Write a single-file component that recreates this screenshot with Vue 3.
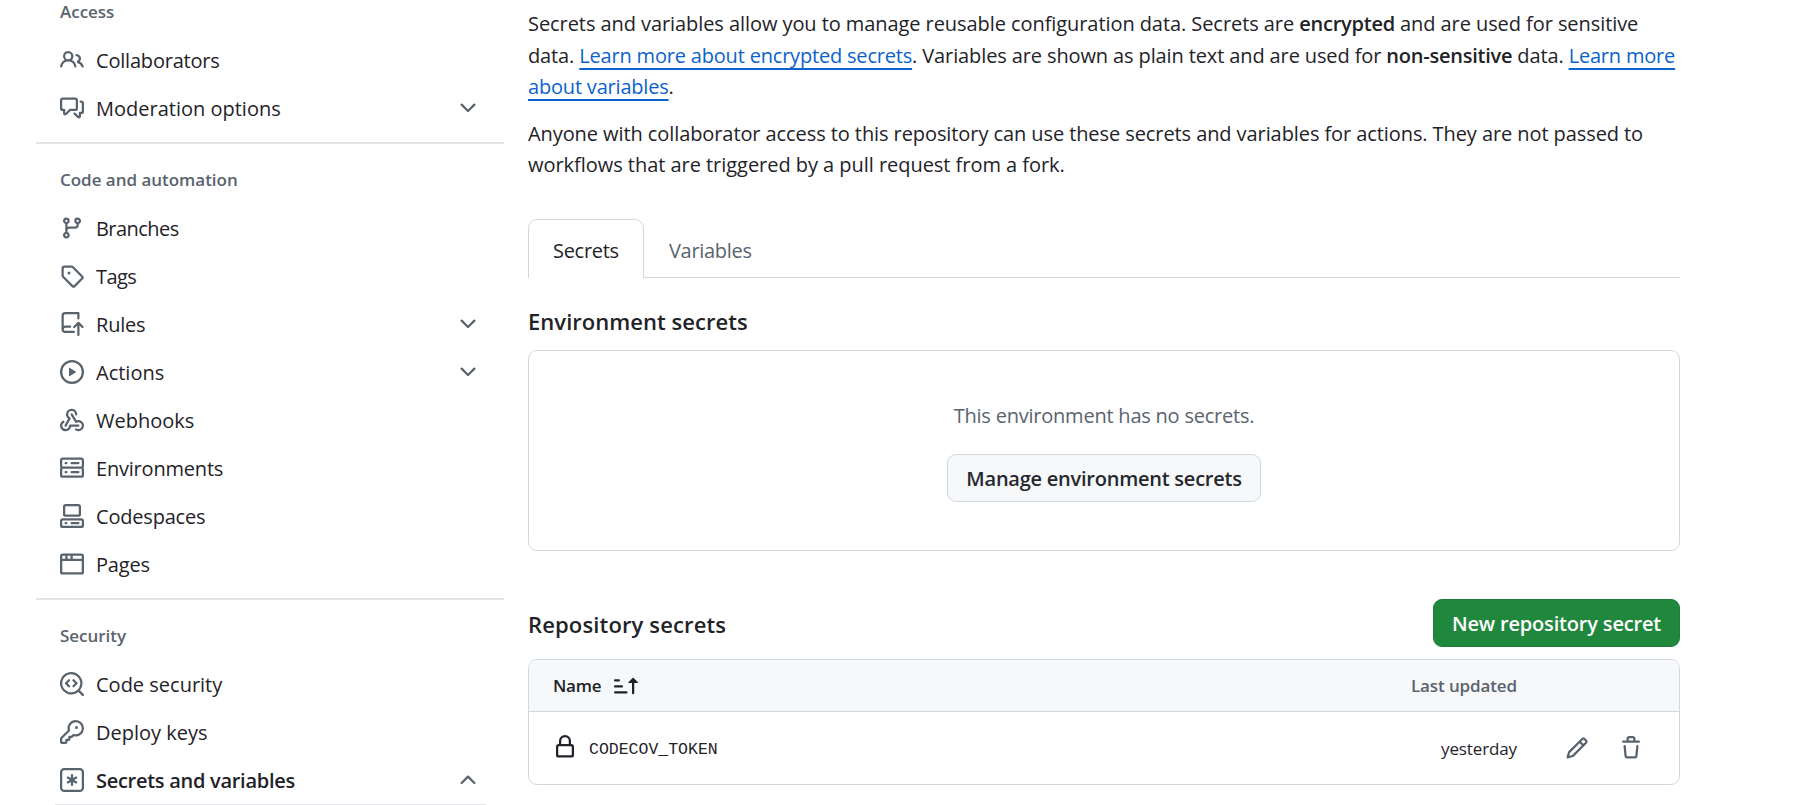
<script setup>
const icons = {
  people: 'M2 5.5a3.5 3.5 0 1 1 5.898 2.549 5.508 5.508 0 0 1 3.034 4.084.75.75 0 1 1-1.482.235 4 4 0 0 0-7.9 0 .75.75 0 0 1-1.482-.236A5.507 5.507 0 0 1 3.102 8.05 3.493 3.493 0 0 1 2 5.5ZM11 4a3.001 3.001 0 0 1 2.22 5.018 5.01 5.01 0 0 1 2.56 3.012.749.749 0 0 1-.885.954.752.752 0 0 1-.549-.514 3.507 3.507 0 0 0-2.522-2.372.75.75 0 0 1-.574-.73v-.352a.75.75 0 0 1 .416-.672A1.5 1.5 0 0 0 11 5.5.75.75 0 0 1 11 4Zm-5.5-.5a2 2 0 1 0-.001 3.999A2 2 0 0 0 5.5 3.5Z',
  discussion: 'M1.75 1h8.5c.966 0 1.75.784 1.75 1.75v5.5A1.75 1.75 0 0 1 10.25 10H7.061l-2.574 2.573A1.458 1.458 0 0 1 2 11.543V10h-.25A1.75 1.75 0 0 1 0 8.25v-5.5C0 1.784.784 1 1.75 1ZM1.5 2.75v5.5c0 .138.112.25.25.25h1a.75.75 0 0 1 .75.75v2.19l2.72-2.72a.749.749 0 0 1 .53-.22h3.5a.25.25 0 0 0 .25-.25v-5.5a.25.25 0 0 0-.25-.25h-8.5a.25.25 0 0 0-.25.25Zm13 2a.25.25 0 0 0-.25-.25h-.5a.75.75 0 0 1 0-1.5h.5c.966 0 1.75.784 1.75 1.75v5.5A1.75 1.75 0 0 1 14.25 12H14v1.543a1.458 1.458 0 0 1-2.487 1.03L9.22 12.28a.749.749 0 0 1 .326-1.275.749.749 0 0 1 .734.215l2.22 2.22v-2.19a.75.75 0 0 1 .75-.75h1a.25.25 0 0 0 .25-.25Z',
  branch: 'M9.5 3.25a2.25 2.25 0 1 1 3 2.122V6A2.5 2.5 0 0 1 10 8.5H6a1 1 0 0 0-1 1v1.128a2.251 2.251 0 1 1-1.5 0V5.372a2.25 2.25 0 1 1 1.5 0v1.836A2.493 2.493 0 0 1 6 7h4a1 1 0 0 0 1-1v-.628A2.25 2.25 0 0 1 9.5 3.25Zm-6 0a.75.75 0 1 0 1.5 0 .75.75 0 0 0-1.5 0Zm8.25-.75a.75.75 0 1 0 0 1.5.75.75 0 0 0 0-1.5ZM4.25 12a.75.75 0 1 0 0 1.5.75.75 0 0 0 0-1.5Z',
  tag: 'M1 7.775V2.75C1 1.784 1.784 1 2.75 1h5.025c.464 0 .91.184 1.238.513l6.25 6.25a1.75 1.75 0 0 1 0 2.474l-5.026 5.026a1.75 1.75 0 0 1-2.474 0l-6.25-6.25A1.752 1.752 0 0 1 1 7.775Zm1.5 0c0 .066.026.13.073.177l6.25 6.25a.25.25 0 0 0 .354 0l5.025-5.025a.25.25 0 0 0 0-.354l-6.25-6.25a.25.25 0 0 0-.177-.073H2.75a.25.25 0 0 0-.25.25ZM6 5a1 1 0 1 1 0 2 1 1 0 0 1 0-2Z',
  rules: 'M1 2.5A2.5 2.5 0 0 1 3.5 0h8.75a.75.75 0 0 1 .75.75v3.5a.75.75 0 0 1-1.5 0V1.5h-8a1 1 0 0 0-1 1v6.708A2.493 2.493 0 0 1 3.5 9h3.25a.75.75 0 0 1 0 1.5H3.5a1 1 0 0 0 0 2h5.75a.75.75 0 0 1 0 1.5H3.5A2.5 2.5 0 0 1 1 11.5ZM11.72 6.72a.75.75 0 0 1 1.06 0l2.75 2.75a.75.75 0 1 1-1.06 1.06L13 9.06v6.19a.75.75 0 0 1-1.5 0V9.06l-1.47 1.47a.75.75 0 1 1-1.06-1.06Z',
  play: 'M8 0a8 8 0 1 1 0 16A8 8 0 0 1 8 0ZM1.5 8a6.5 6.5 0 1 0 13 0 6.5 6.5 0 0 0-13 0Zm4.879-2.773 4.264 2.559a.25.25 0 0 1 0 .428l-4.264 2.559A.25.25 0 0 1 6 10.559V5.442a.25.25 0 0 1 .379-.215Z',
  webhook: 'M5.5 4.25a2.25 2.25 0 0 1 4.5 0 .75.75 0 0 0 1.5 0 3.75 3.75 0 1 0-6.14 2.889l-2.272 4.258a.75.75 0 0 0 1.324.706L7 7.25a.75.75 0 0 0-.309-1.015A2.25 2.25 0 0 1 5.5 4.25ZM7.364 3.607a.75.75 0 0 1 1.03.257l2.608 4.349a3.75 3.75 0 1 1-.628 6.785.75.75 0 0 1 .752-1.299 2.25 2.25 0 1 0-.033-3.88.75.75 0 0 1-1.03-.256L7.107 4.636a.75.75 0 0 1 .257-1.03ZM2.9 8.776A.75.75 0 0 1 2.625 9.8 2.25 2.25 0 1 0 6 11.75a.75.75 0 0 1 .75-.751h5.5a.75.75 0 0 1 0 1.5H7.425a3.751 3.751 0 1 1-5.55-3.998.75.75 0 0 1 1.024.274Z',
  server: 'M1.75 1h12.5c.966 0 1.75.784 1.75 1.75v4c0 .372-.116.717-.314 1 .198.283.314.628.314 1v4a1.75 1.75 0 0 1-1.75 1.75H1.75A1.75 1.75 0 0 1 0 12.75v-4c0-.358.109-.707.314-1a1.739 1.739 0 0 1-.314-1v-4C0 1.784.784 1 1.75 1ZM1.5 2.75v4c0 .138.112.25.25.25h12.5a.25.25 0 0 0 .25-.25v-4a.25.25 0 0 0-.25-.25H1.75a.25.25 0 0 0-.25.25Zm.25 5.75a.25.25 0 0 0-.25.25v4c0 .138.112.25.25.25h12.5a.25.25 0 0 0 .25-.25v-4a.25.25 0 0 0-.25-.25ZM7 4.75A.75.75 0 0 1 7.75 4h4.5a.75.75 0 0 1 0 1.5h-4.5A.75.75 0 0 1 7 4.75ZM7.75 10h4.5a.75.75 0 0 1 0 1.5h-4.5a.75.75 0 0 1 0-1.5ZM3 4.75A.75.75 0 0 1 3.75 4h.5a.75.75 0 0 1 0 1.5h-.5A.75.75 0 0 1 3 4.75ZM3.75 10h.5a.75.75 0 0 1 0 1.5h-.5a.75.75 0 0 1 0-1.5Z',
  codespaces: 'M0 11.25c0-.966.784-1.75 1.75-1.75h12.5c.966 0 1.75.784 1.75 1.75v3A1.75 1.75 0 0 1 14.25 16H1.75A1.75 1.75 0 0 1 0 14.25Zm2-9.5C2 .784 2.784 0 3.75 0h8.5C13.216 0 14 .784 14 1.75v5a1.75 1.75 0 0 1-1.75 1.75h-8.5A1.75 1.75 0 0 1 2 6.75Zm1.75-.25a.25.25 0 0 0-.25.25v5c0 .138.112.25.25.25h8.5a.25.25 0 0 0 .25-.25v-5a.25.25 0 0 0-.25-.25Zm-2 9.5a.25.25 0 0 0-.25.25v3c0 .138.112.25.25.25h12.5a.25.25 0 0 0 .25-.25v-3a.25.25 0 0 0-.25-.25ZM7 12.75a.75.75 0 0 1 .75-.75h4.5a.75.75 0 0 1 0 1.5h-4.5a.75.75 0 0 1-.75-.75Zm-4 0a.75.75 0 0 1 .75-.75h.5a.75.75 0 0 1 0 1.5h-.5a.75.75 0 0 1-.75-.75Z',
  browser: 'M0 2.75C0 1.784.784 1 1.75 1h12.5c.966 0 1.75.784 1.75 1.75v10.5A1.75 1.75 0 0 1 14.25 15H1.75A1.75 1.75 0 0 1 0 13.25ZM14.5 6h-13v7.25c0 .138.112.25.25.25h12.5a.25.25 0 0 0 .25-.25Zm-6-3.5v2h6V2.75a.25.25 0 0 0-.25-.25ZM5 2.5v2h2v-2Zm-3.25 0a.25.25 0 0 0-.25.25V4.5h2v-2Z',
  codescan: 'M8.47 4.97a.75.75 0 0 0 0 1.06L9.94 7.5 8.47 8.97a.75.75 0 1 0 1.06 1.06l2-2a.75.75 0 0 0 0-1.06l-2-2a.75.75 0 0 0-1.06 0ZM6.53 6.03a.75.75 0 0 0-1.06-1.06l-2 2a.75.75 0 0 0 0 1.06l2 2a.75.75 0 1 0 1.06-1.06L5.06 7.5l1.47-1.47ZM12.246 13.307a7.501 7.501 0 1 1 1.06-1.06l2.474 2.473a.749.749 0 1 1-1.06 1.06l-2.474-2.473ZM1.5 7.5a6.002 6.002 0 0 0 3.608 5.504 6.002 6.002 0 0 0 6.486-1.117.748.748 0 0 1 .292-.293A6 6 0 1 0 1.5 7.5Z',
  key: 'M10.5 0a5.499 5.499 0 1 1-1.288 10.848l-.932.932a.749.749 0 0 1-.53.22H7v.75a.749.749 0 0 1-.22.53l-.5.5a.749.749 0 0 1-.53.22H5v.75a.749.749 0 0 1-.22.53l-.5.5a.749.749 0 0 1-.53.22h-2A1.75 1.75 0 0 1 0 14.25v-2c0-.199.079-.389.22-.53l4.932-4.932A5.5 5.5 0 0 1 10.5 0Zm-4 5.5c-.001.431.069.86.205 1.269a.75.75 0 0 1-.181.768L1.5 12.56v1.69c0 .138.112.25.25.25h1.69l.06-.06v-1.19a.75.75 0 0 1 .75-.75h1.19l.06-.06v-1.19a.75.75 0 0 1 .75-.75h1.19l1.023-1.025a.75.75 0 0 1 .768-.18A4 4 0 1 0 6.5 5.5ZM11 6a1 1 0 1 1 0-2 1 1 0 0 1 0 2Z',
  asterisk: 'M0 2.75A2.75 2.75 0 0 1 2.75 0h10.5A2.75 2.75 0 0 1 16 2.75v10.5A2.75 2.75 0 0 1 13.25 16H2.75A2.75 2.75 0 0 1 0 13.25ZM2.75 1.5c-.69 0-1.25.56-1.25 1.25v10.5c0 .69.56 1.25 1.25 1.25h10.5c.69 0 1.25-.56 1.25-1.25V2.75c0-.69-.56-1.25-1.25-1.25ZM8 4a.75.75 0 0 1 .75.75V6.7l1.69-.975a.75.75 0 0 1 .75 1.3L9.5 8l1.69.976a.75.75 0 0 1-.75 1.298L8.75 9.3v1.951a.75.75 0 0 1-1.5 0V9.299l-1.69.976a.75.75 0 0 1-.75-1.3L6.5 8l-1.69-.975a.75.75 0 0 1 .75-1.3l1.69.976V4.75A.75.75 0 0 1 8 4Z',
  down: 'M12.78 5.22a.749.749 0 0 1 0 1.06l-4.25 4.25a.749.749 0 0 1-1.06 0L3.22 6.28a.749.749 0 1 1 1.06-1.06L8 8.939l3.72-3.719a.749.749 0 0 1 1.06 0Z',
  up: 'M3.22 10.53a.749.749 0 0 1 0-1.06l4.25-4.25a.749.749 0 0 1 1.06 0l4.25 4.25a.749.749 0 1 1-1.06 1.06L8 6.811 4.28 10.53a.749.749 0 0 1-1.06 0Z',
  lock: 'M4 4a4 4 0 0 1 8 0v2h.25c.966 0 1.75.784 1.75 1.75v5.5A1.75 1.75 0 0 1 12.25 15h-8.5A1.75 1.75 0 0 1 2 13.25v-5.5C2 6.784 2.784 6 3.75 6H4Zm8.25 3.5h-8.5a.25.25 0 0 0-.25.25v5.5c0 .138.112.25.25.25h8.5a.25.25 0 0 0 .25-.25v-5.5a.25.25 0 0 0-.25-.25ZM10.5 6V4a2.5 2.5 0 1 0-5 0v2Z',
  pencil: 'M11.013 1.427a1.75 1.75 0 0 1 2.474 0l1.086 1.086a1.75 1.75 0 0 1 0 2.474l-8.61 8.61c-.21.21-.47.364-.756.445l-3.251.93a.75.75 0 0 1-.927-.928l.929-3.25c.081-.286.235-.547.445-.758l8.61-8.61Zm.176 4.823L9.75 4.81l-6.286 6.287a.253.253 0 0 0-.064.108l-.558 1.953 1.953-.558a.253.253 0 0 0 .108-.064Zm1.238-3.763a.25.25 0 0 0-.354 0L10.811 3.75l1.439 1.44 1.263-1.263a.25.25 0 0 0 0-.354Z',
  trash: 'M11 1.75V3h2.25a.75.75 0 0 1 0 1.5H2.75a.75.75 0 0 1 0-1.5H5V1.75C5 .784 5.784 0 6.75 0h2.5C10.216 0 11 .784 11 1.75ZM4.496 6.675l.66 6.6a.25.25 0 0 0 .249.225h5.19a.25.25 0 0 0 .249-.225l.66-6.6a.75.75 0 0 1 1.492.149l-.66 6.6A1.748 1.748 0 0 1 10.595 15h-5.19a1.75 1.75 0 0 1-1.741-1.575l-.66-6.6a.75.75 0 1 1 1.492-.15ZM6.5 1.75V3h3V1.75a.25.25 0 0 0-.25-.25h-2.5a.25.25 0 0 0-.25.25Z',
  sort: 'm12.927 2.573 3 3A.25.25 0 0 1 15.75 6H13.5v6.75a.75.75 0 0 1-1.5 0V6H9.75a.25.25 0 0 1-.177-.427l3-3a.25.25 0 0 1 .354 0ZM0 12.25a.75.75 0 0 1 .75-.75h7.5a.75.75 0 0 1 0 1.5H.75a.75.75 0 0 1-.75-.75Zm0-4a.75.75 0 0 1 .75-.75h4.5a.75.75 0 0 1 0 1.5H.75A.75.75 0 0 1 0 8.25Zm0-4a.75.75 0 0 1 .75-.75h2.5a.75.75 0 0 1 0 1.5H.75A.75.75 0 0 1 0 4.25Z'
}

const groups = [
  { title: 'Access', items: [
    { label: 'Collaborators', icon: 'people' },
    { label: 'Moderation options', icon: 'discussion', chevron: 'down', wide: true }
  ] },
  { title: 'Code and automation', items: [
    { label: 'Branches', icon: 'branch', tight: true },
    { label: 'Tags', icon: 'tag', tight: true },
    { label: 'Rules', icon: 'rules', chevron: 'down' },
    { label: 'Actions', icon: 'play', chevron: 'down', wide: true },
    { label: 'Webhooks', icon: 'webhook', wide: true },
    { label: 'Environments', icon: 'server' },
    { label: 'Codespaces', icon: 'codespaces' },
    { label: 'Pages', icon: 'browser' }
  ] },
  { title: 'Security', items: [
    { label: 'Code security', icon: 'codescan', wide: true },
    { label: 'Deploy keys', icon: 'key', wide: true },
    { label: 'Secrets and variables', icon: 'asterisk', chevron: 'up', active: true }
  ] }
]
</script>

<template>
  <div class="page">
    <nav class="sidebar">
      <section v-for="g in groups" :key="g.title" class="group">
        <h3 class="group-title">{{ g.title }}</h3>
        <ul class="list">
          <li v-for="i in g.items" :key="i.label" class="item" :class="{ active: i.active, wide: i.wide, tight: i.tight }">
            <svg class="icon" viewBox="0 0 16 16"><path fill-rule="evenodd" :d="icons[i.icon]" /></svg>
            <span class="label">{{ i.label }}</span>
            <svg v-if="i.chevron" class="icon" viewBox="0 0 16 16"><path :d="icons[i.chevron]" /></svg>
          </li>
        </ul>
      </section>
      <div class="subline"></div>
    </nav>

    <main class="main">
      <p class="para">
        <span class="line first">Secrets and variables allow you to manage reusable configuration data. Secrets are <b>encrypted</b> and are used for sensitive</span>
        <span class="line second">data. <a>Learn more about encrypted secrets</a>. Variables are shown as plain text and are used for <b>non-sensitive</b> data. <a>Learn more</a></span>
        <span class="line"><a>about variables</a>.</span>
      </p>
      <p class="para">
        <span class="line">Anyone with collaborator access to this repository can use these secrets and variables for actions. They are not passed to</span>
        <span class="line last">workflows that are triggered by a pull request from a fork.</span>
      </p>

      <div class="tabs">
        <div class="tab selected">Secrets</div>
        <div class="tab">Variables</div>
      </div>

      <h2 class="heading env">Environment secrets</h2>
      <div class="blank">
        <p class="blank-text">This environment has no secrets.</p>
        <button class="btn">Manage environment secrets</button>
      </div>

      <div class="repo-head">
        <h2 class="heading repo">Repository secrets</h2>
        <button class="btn primary">New repository secret</button>
      </div>

      <div class="table">
        <div class="thead">
          <span class="name">Name</span>
          <svg class="icon dark" viewBox="0 0 16 16"><path :d="icons.sort" /></svg>
          <span class="updated">Last updated</span>
        </div>
        <div class="trow">
          <svg class="icon dark lock" viewBox="0 0 16 16"><path fill-rule="evenodd" :d="icons.lock" /></svg>
          <code class="code">CODECOV_TOKEN</code>
          <span class="date">yesterday</span>
          <svg class="icon pencil" viewBox="0 0 16 16"><path fill-rule="evenodd" :d="icons.pencil" /></svg>
          <svg class="icon trash" viewBox="0 0 16 16"><path fill-rule="evenodd" :d="icons.trash" /></svg>
        </div>
      </div>
    </main>
  </div>
</template>

<style>
body { margin: 0; background: #fff; overflow: hidden; }
</style>

<style scoped>
* { box-sizing: border-box; }
.page {
  display: flex;
  height: 805px;
  overflow: hidden;
  padding-left: 36px;
  font-family: "Open Sans", "Noto Sans", sans-serif;
  font-size: 20px;
  color: #1f2328;
  white-space: nowrap;
}
h2, h3, p, ul { margin: 0; padding: 0; font-weight: 400; }
.icon { width: 24px; height: 24px; flex: none; fill: #59636e; display: block; }
.icon.dark { fill: #1f2328; }

.sidebar { width: 468px; flex: none; }
.group + .group { margin-top: 10px; border-top: 2px solid #e2e4e7; padding-top: 24px; }
.group-title {
  height: 22px;
  padding-left: 24px;
  font-size: 17px;
  line-height: 24px;
  font-weight: 600;
  letter-spacing: -0.02px;
  color: #59636e;
}
.list { list-style: none; margin-top: 14px; }
.item { display: flex; align-items: center; height: 48px; padding: 0 24px; letter-spacing: -0.2px; }
.item.wide { letter-spacing: 0; }
.item.tight { letter-spacing: -0.55px; }
.item.active { font-weight: 600; letter-spacing: -0.28px; }
.label { flex: 1; margin-left: 12px; }
.subline { height: 1px; margin: 0 18px 0 19px; background: #e2e4e7; }

.main { width: 1152px; margin-left: 24px; padding-top: 7.5px; flex: none; }
.para { line-height: 31.5px; letter-spacing: -0.085px; }
.para + .para { margin-top: 15.5px; }
.line { display: block; height: 31.5px; }
.line.first { height: 32px; letter-spacing: -0.072px; }
.line.second { height: 31px; letter-spacing: -0.12px; }
.line.last { letter-spacing: -0.04px; }
.para b { font-weight: 600; letter-spacing: -0.24px; }
.para a {
  color: #0b62cb;
  letter-spacing: -0.19px;
  text-decoration: underline 2px;
  text-decoration-skip-ink: none;
  text-underline-offset: 5px;
}
.tabs { display: flex; height: 59px; margin-top: 38.5px; box-shadow: inset 0 -1px #d1d9e0; }
.tab {
  height: 59px;
  padding: 0 24px;
  border: 1px solid transparent;
  border-bottom: 0;
  line-height: 62px;
  color: #59636e;
  letter-spacing: -0.3px;
}
.tab.selected { width: 116px; background: #fff; border-color: #d1d9e0; border-radius: 9px 9px 0 0; color: #1f2328; }
.heading { font-size: 22px; font-weight: 600; line-height: 32px; }
.env { margin-top: 27px; letter-spacing: 0.04px; }
.repo { padding-top: 2px; letter-spacing: 0.14px; }
.blank {
  display: flex;
  flex-direction: column;
  align-items: center;
  height: 201px;
  margin-top: 13px;
  border: 1px solid #d1d9e0;
  border-radius: 9px;
}
.blank-text { margin-top: 49px; line-height: 32px; letter-spacing: -0.22px; color: #59636e; }
.btn {
  width: 314px;
  height: 48px;
  padding: 2px 0 0;
  margin: 22px 0 0;
  border: 1px solid #d1d9e0;
  border-radius: 9px;
  background: #f6f8fa;
  font: 600 20px/44px "Open Sans", "Noto Sans", sans-serif;
  letter-spacing: -0.24px;
  color: #25292e;
}
.btn.primary { width: 247px; margin: 0; background: #1f883d; border-color: #1f7c3a; color: #fff; letter-spacing: -0.17px; }
.repo-head { display: flex; justify-content: space-between; align-items: center; margin-top: 48px; }
.table { height: 126px; margin-top: 12px; border: 1px solid #d1d9e0; border-radius: 9px; overflow: hidden; }
.thead {
  display: flex;
  align-items: center;
  height: 52px;
  padding: 0 162px 0 24px;
  border-bottom: 1px solid #d1d9e0;
  background: #f6f8fa;
  font-size: 17px;
  font-weight: 600;
}
.name { width: 61px; letter-spacing: -0.25px; }
.updated { margin-left: auto; color: #59636e; letter-spacing: -0.12px; }
.trow { display: flex; align-items: center; height: 72px; padding: 0 36px 0 24px; font-size: 17px; }
.lock { margin-top: -3px; }
.code { margin-left: 12px; padding-top: 2px; font-family: "Liberation Mono", monospace; font-size: 16.5px; }
.date { margin-left: auto; letter-spacing: -0.12px; }
.pencil { margin-left: 48px; }
.trash { margin-left: 30px; }
</style>
